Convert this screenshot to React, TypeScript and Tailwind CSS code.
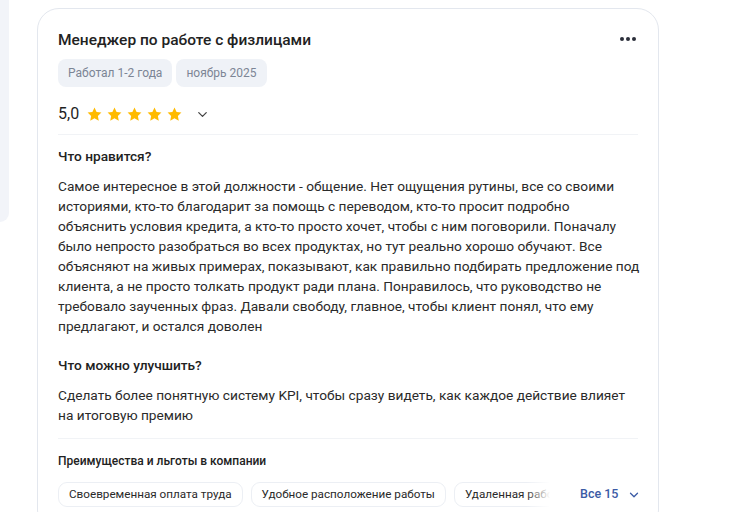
import React from 'react';
import { ChevronDown } from 'lucide-react';

const Star: React.FC = () => (
  <svg width="17" height="17" viewBox="0 0 24 24" className="shrink-0">
    <path
      d="M12 2.2l2.95 6.2 6.8.85-5 4.7 1.28 6.75L12 17.4l-6.03 3.3 1.28-6.75-5-4.7 6.8-.85z"
      fill="#ffba00"
    />
  </svg>
);

const perks = ['Своевременная оплата труда', 'Удобное расположение работы', 'Удаленная работа'];

export default function App() {
  return (
    <div
      className="relative h-[512px] w-[743px] overflow-hidden bg-white text-[#1f1f1f]"
      style={{ fontFamily: 'Roboto, "Liberation Sans", sans-serif' }}
    >
      <div className="absolute left-0 top-0 h-[222px] w-[9px] rounded-br-[14px] bg-[#f2f4f9]" />

      <div className="ml-[37px] mt-[8px] w-[622px] rounded-[22px] border border-[#e3e7ee] pl-[20px] pr-[16px] pt-[18px] pb-6">
        <div className="flex items-start justify-between">
          <h2 className="text-[15.5px] font-medium leading-[26px] text-[#222]">Менеджер по работе с физлицами</h2>
          <div className="mt-[10px] mr-[6px] flex gap-[2px]">
            <span className="h-[4px] w-[4px] rounded-full bg-[#2b2f3a]" />
            <span className="h-[4px] w-[4px] rounded-full bg-[#2b2f3a]" />
            <span className="h-[4px] w-[4px] rounded-full bg-[#2b2f3a]" />
          </div>
        </div>

        <div className="mt-[6px] flex gap-[4px]">
          <span className="rounded-[8px] bg-[#eff2f7] px-[10px] py-[5px] text-[12px] leading-[18px] text-[#7c8595]">
            Работал 1-2 года
          </span>
          <span className="rounded-[8px] bg-[#eff2f7] px-[10px] py-[5px] text-[12px] leading-[18px] text-[#7c8595]">
            ноябрь 2025
          </span>
        </div>

        <div className="mt-[16px] flex items-center">
          <span className="text-[16px] leading-[22px] text-[#1f1f1f]">5,0</span>
          <div className="ml-[7px] flex gap-[3px]">
            <Star />
            <Star />
            <Star />
            <Star />
            <Star />
          </div>
          <ChevronDown className="ml-[12px] h-[15px] w-[15px] text-[#444]" strokeWidth={2} />
        </div>

        <div className="mt-[9px] mr-[4px] border-t border-[#f1f3f6]" />

        <h3 className="mt-[11px] text-[13.7px] font-medium leading-[20px] text-[#222]">Что нравится?</h3>
        <p className="mt-[10px] text-[13.7px] leading-[20px] text-[#2a2a2a]">
          Самое интересное в этой должности - общение. Нет ощущения рутины, все со своими историями, кто-то благодарит
          за помощь с переводом, кто-то просит подробно
          <br />
          объяснить условия кредита, а кто-то просто хочет, чтобы с ним поговорили. Поначалу
          <br />
          было непросто разобраться во всех продуктах, но тут реально хорошо обучают. Все
          <br />
          объясняют на живых примерах, показывают, как правильно подбирать предложение под
          <br />
          клиента, а не просто толкать продукт ради плана. Понравилось, что руководство не
          <br />
          требовало заученных фраз. Давали свободу, главное, чтобы клиент понял, что ему
          <br />
          предлагают, и остался доволен
        </p>

        <h3 className="mt-[19px] text-[13.7px] font-medium leading-[20px] text-[#222]">Что можно улучшить?</h3>
        <p className="mt-[10px] text-[13.7px] leading-[20px] text-[#2a2a2a]">
          Сделать более понятную систему KPI, чтобы сразу видеть, как каждое действие влияет
          <br />
          на итоговую премию
        </p>

        <div className="mt-[13px] mr-[4px] border-t border-[#f1f3f6]" />

        <h4 className="mt-[13px] text-[12px] font-medium leading-[18px] text-[#222]">
          Преимущества и льготы в компании
        </h4>

        <div className="mt-[12px] flex items-center">
          <div className="relative flex w-[492px] shrink-0 gap-[8px] overflow-hidden">
            {perks.map((p) => (
              <span
                key={p}
                className="shrink-0 whitespace-nowrap rounded-[9px] border border-[#eceff4] px-[10px] py-[3px] text-[11.7px] leading-[17px] text-[#2a2a2a]"
              >
                {p}
              </span>
            ))}
            <div className="absolute right-0 top-0 h-full w-[24px] bg-gradient-to-r from-white/0 to-white" />
          </div>
          <button className="ml-[30px] flex items-center gap-[9px] whitespace-nowrap text-[12.5px] font-medium text-[#3b5ba5]">
            Все 15
            <ChevronDown className="h-[14px] w-[14px]" strokeWidth={2.2} />
          </button>
        </div>
      </div>
    </div>
  );
}
